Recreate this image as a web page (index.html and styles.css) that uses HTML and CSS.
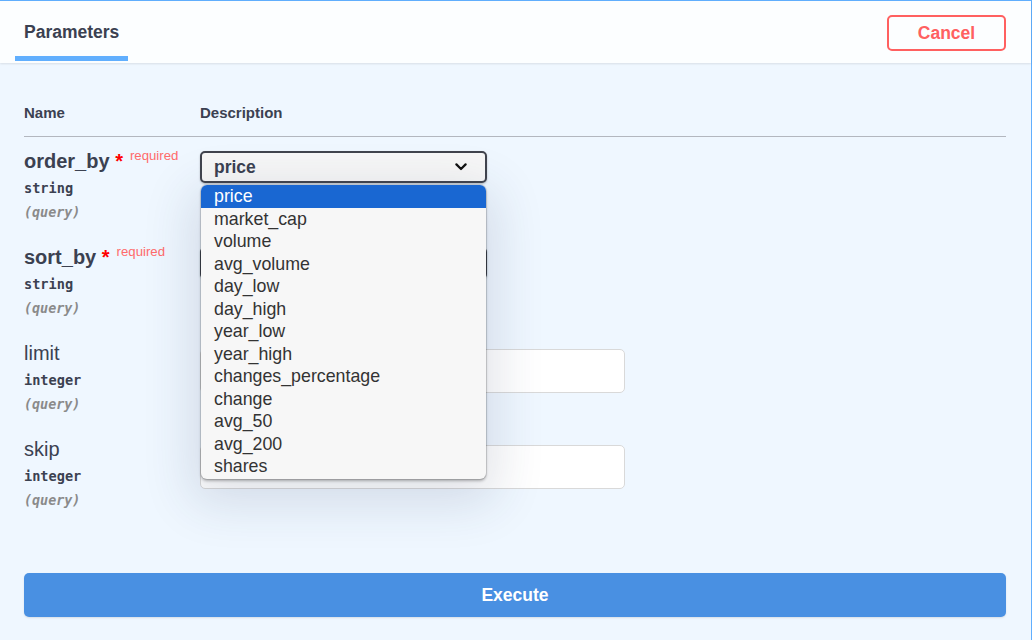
FILE: index.html
```html
<!DOCTYPE html>
<html lang="en">
<head>
<meta charset="utf-8">
<title>Parameters</title>
<link rel="stylesheet" href="styles.css">
</head>
<body>
<div class="opblock">
  <div class="section-header">
    <div class="tab">
      <h4 class="tab-label">Parameters</h4>
      <div class="tab-bar"></div>
    </div>
    <button class="btn-cancel" type="button">Cancel</button>
  </div>

  <div class="params">
    <div class="params-head">
      <div class="col-name">Name</div>
      <div class="col-desc">Description</div>
    </div>

    <div class="param-row">
      <div class="col-name">
        <div class="pname required">order_by<span class="star">&nbsp;*</span><span class="req">required</span></div>
        <div class="ptype">string</div>
        <div class="pin">(query)</div>
      </div>
      <div class="col-desc">
        <div class="select-wrap">
          <div class="select">
            <span class="select-value">price</span>
            <svg class="chevron" width="12" height="8" viewBox="0 0 12 8"><polyline points="1.4,1.4 6,6 10.6,1.4" fill="none" stroke="#111" stroke-width="2.2" stroke-linecap="round" stroke-linejoin="round"/></svg>
          </div>
          <ul class="popup">
            <li class="opt active">price</li>
            <li class="opt">market_cap</li>
            <li class="opt">volume</li>
            <li class="opt">avg_volume</li>
            <li class="opt">day_low</li>
            <li class="opt">day_high</li>
            <li class="opt">year_low</li>
            <li class="opt">year_high</li>
            <li class="opt">changes_percentage</li>
            <li class="opt">change</li>
            <li class="opt">avg_50</li>
            <li class="opt">avg_200</li>
            <li class="opt">shares</li>
          </ul>
        </div>
      </div>
    </div>

    <div class="param-row">
      <div class="col-name">
        <div class="pname required">sort_by<span class="star">&nbsp;*</span><span class="req">required</span></div>
        <div class="ptype">string</div>
        <div class="pin">(query)</div>
      </div>
      <div class="col-desc">
        <div class="select-wrap">
          <div class="select">
            <svg class="chevron" width="12" height="8" viewBox="0 0 12 8"><polyline points="1.4,1.4 6,6 10.6,1.4" fill="none" stroke="#111" stroke-width="2.2" stroke-linecap="round" stroke-linejoin="round"/></svg>
          </div>
        </div>
      </div>
    </div>

    <div class="param-row">
      <div class="col-name">
        <div class="pname">limit</div>
        <div class="ptype">integer</div>
        <div class="pin">(query)</div>
      </div>
      <div class="col-desc">
        <div class="text-input"></div>
      </div>
    </div>

    <div class="param-row">
      <div class="col-name">
        <div class="pname">skip</div>
        <div class="ptype">integer</div>
        <div class="pin">(query)</div>
      </div>
      <div class="col-desc">
        <div class="text-input"></div>
      </div>
    </div>
  </div>

  <div class="execute-wrap">
    <button class="btn-execute" type="button">Execute</button>
  </div>
</div>
</body>
</html>
```

FILE: styles.css
```css
html {
  overflow: hidden;
}

body {
  margin: 0;
  background: #ffffff;
  font-family: "Liberation Sans", Arial, sans-serif;
  color: #3b4151;
}

.opblock {
  margin-right: 2px;
  border-top: 1px solid #61affe;
  border-right: 1px solid #61affe;
  background: #eff7ff;
}

.section-header {
  display: flex;
  justify-content: space-between;
  align-items: flex-start;
  height: 62px;
  box-sizing: border-box;
  padding: 0 25px 0 15px;
  background: rgba(255, 255, 255, 0.8);
  box-shadow: 0 1px 2px rgba(0, 0, 0, 0.1);
  position: relative;
}

.tab {
  display: flex;
  flex-direction: column;
  padding-top: 21px;
}

.tab-label {
  margin: 0;
  padding: 0 9px;
  font-size: 17.5px;
  line-height: 20px;
  font-weight: 700;
  color: #3b4151;
}

.tab-bar {
  margin-top: 14px;
  height: 5px;
  background: #61affe;
}

.btn-cancel {
  margin-top: 14px;
  width: 119px;
  height: 36px;
  box-sizing: border-box;
  border: 2px solid #ff6060;
  border-radius: 5px;
  background: transparent;
  color: #ff6060;
  font-family: "Liberation Sans", Arial, sans-serif;
  font-size: 17.5px;
  font-weight: 700;
  padding: 0;
}

.params {
  padding: 26px 25px 0 24px;
}

.params-head {
  display: flex;
  padding: 15px 0;
  border-bottom: 1px solid #b3b7bf;
  font-size: 15px;
  line-height: 17px;
  font-weight: 700;
}

.col-name {
  width: 176px;
  flex: none;
}

.col-desc {
  flex: 1;
}

.param-row {
  display: flex;
  padding: 13px 0 12px;
}

.pname {
  height: 23px;
  font-size: 20px;
  line-height: 23px;
  white-space: nowrap;
}

.pname.required {
  font-weight: 700;
}

.star {
  color: #ff0000;
  line-height: 0;
}

.req {
  position: relative;
  top: -8px;
  padding-left: 7px;
  font-size: 13.2px;
  line-height: 0;
  font-weight: 400;
  color: #ff6b6b;
}

.ptype {
  padding: 7px 0 5px;
  font-family: "DejaVu Sans Mono", monospace;
  font-size: 13.6px;
  line-height: 17px;
  height: 17px;
  font-weight: 700;
  color: #3b4151;
}

.pin {
  margin-top: 2px;
  font-family: "DejaVu Sans Mono", monospace;
  font-size: 13.4px;
  line-height: 17px;
  height: 17px;
  font-style: italic;
  font-weight: 700;
  color: #8a8a8a;
}

.select-wrap {
  position: relative;
  width: 287px;
  margin-top: 1px;
}

.select {
  display: flex;
  align-items: center;
  height: 32px;
  box-sizing: border-box;
  border: 2px solid #41444e;
  border-radius: 5px;
  background: #f7f7f7;
  box-shadow: 0 1px 2px rgba(0, 0, 0, 0.25);
  padding-left: 12px;
  padding-right: 18px;
}

.select-value {
  font-size: 17.5px;
  line-height: 20px;
  font-weight: 700;
  color: #3b4151;
}

.chevron {
  margin-left: auto;
  display: block;
}

.popup {
  position: absolute;
  z-index: 10;
  top: 34px;
  left: 1px;
  width: 285px;
  margin: 0;
  padding: 0 0 1px;
  list-style: none;
  background: #f7f7f7;
  border-radius: 6px;
  overflow: hidden;
  box-shadow: 0 0 0 1px rgba(0, 0, 0, 0.1), 0 2px 3px rgba(0, 0, 0, 0.28), 0 14px 50px 10px rgba(40, 60, 90, 0.14);
}

.opt {
  height: 22.5px;
  line-height: 22.5px;
  padding-left: 13px;
  font-size: 17.8px;
  color: #333333;
}

.opt.active {
  background: #1967d2;
  color: #ffffff;
}

.text-input {
  margin-top: 7px;
  width: 425px;
  height: 44px;
  box-sizing: border-box;
  border: 1px solid #d9d9d9;
  border-radius: 5px;
  background: #ffffff;
}

.execute-wrap {
  padding: 52px 25px 23px 24px;
}

.btn-execute {
  display: block;
  width: 100%;
  height: 44px;
  border: 0;
  border-radius: 5px;
  background: #4990e2;
  color: #ffffff;
  font-family: "Liberation Sans", Arial, sans-serif;
  font-size: 17.5px;
  font-weight: 700;
  box-shadow: 0 1px 2px rgba(0, 0, 0, 0.1);
}
```
